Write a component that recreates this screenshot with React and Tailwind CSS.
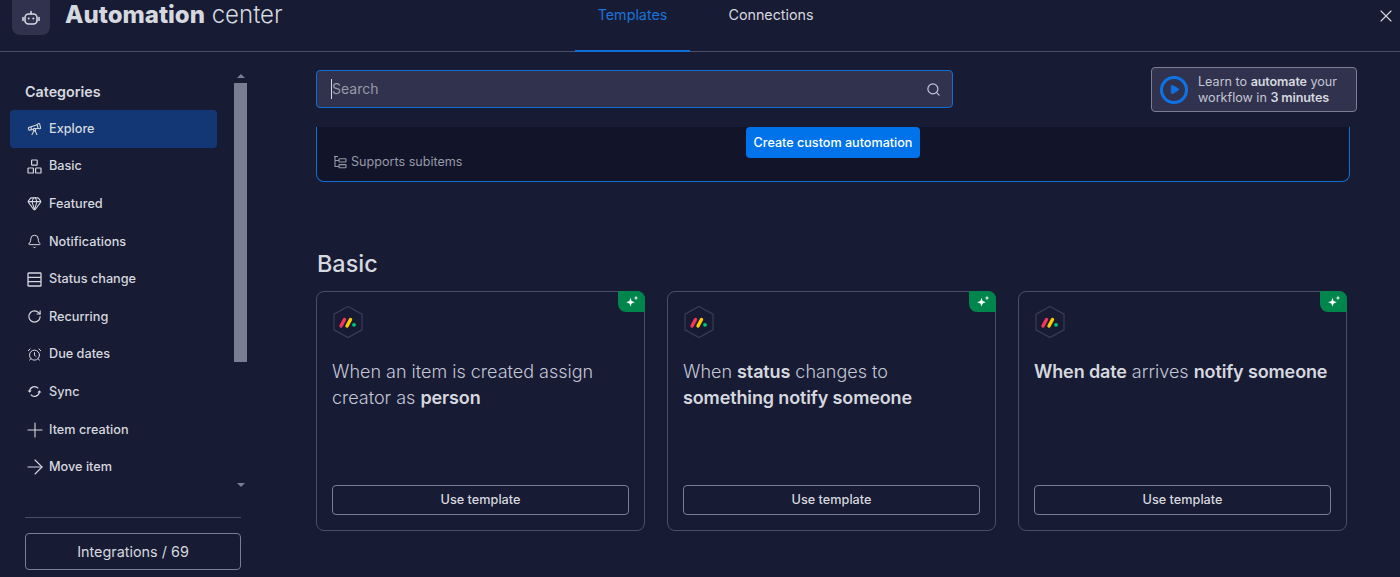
import { Search, X, Play, Telescope, Gem, Bell, RotateCw, AlarmClock, Plus, ArrowRight } from 'lucide-react'

const BotIcon = () => (
  <svg width="18" height="16" viewBox="0 0 18 16" fill="none" stroke="currentColor" strokeWidth="1.6">
    <rect x="3" y="4" width="12" height="10" rx="3.5" />
    <path d="M9 4V1.5M1 7.5V10.5M17 7.5V10.5" strokeLinecap="round" />
    <circle cx="6.7" cy="8.6" r="1" fill="currentColor" stroke="none" />
    <circle cx="11.3" cy="8.6" r="1" fill="currentColor" stroke="none" />
  </svg>
)

const BasicIcon = () => (
  <svg width="15" height="15" viewBox="0 0 15 15" fill="none" stroke="currentColor" strokeWidth="1.2">
    <rect x="4.6" y="1" width="5.6" height="5.2" rx="0.6" />
    <rect x="1" y="9" width="5.4" height="5" rx="0.6" />
    <rect x="8.6" y="9" width="5.4" height="5" rx="0.6" />
  </svg>
)

const StatusIcon = () => (
  <svg width="15" height="15" viewBox="0 0 15 15" fill="none" stroke="currentColor" strokeWidth="1.3">
    <rect x="1" y="1" width="13" height="13" rx="0.6" />
    <path d="M1 5.3H14M1 9.7H14" />
  </svg>
)

const SyncIcon = () => (
  <svg width="16" height="15" viewBox="0 0 16 15" fill="none" stroke="currentColor" strokeWidth="1.3">
    <path d="M2.8 7.2A5.2 5.2 0 0 1 12 4.2" />
    <path d="M13.2 7.8A5.2 5.2 0 0 1 4 10.8" />
    <path d="M0.6 6.4H5L2.8 8.8Z" fill="currentColor" stroke="none" />
    <path d="M11 8.6H15.4L13.2 6.2Z" fill="currentColor" stroke="none" />
  </svg>
)

const SubitemsIcon = () => (
  <svg width="14" height="14" viewBox="0 0 14 14" fill="none" stroke="currentColor" strokeWidth="1.1">
    <path d="M2 1V11.5H6M2 5.5H6" />
    <path d="M1 1.5H5" />
    <rect x="6" y="3.8" width="7" height="3.2" rx="0.5" />
    <rect x="6" y="9.6" width="7" height="3.2" rx="0.5" />
  </svg>
)

const AutomationBadgeIcon = () => (
  <svg width="14" height="13" viewBox="0 0 14 13" fill="white">
    <path d="M5.5 2.8 6.6 6 9.8 7.2 6.6 8.4 5.5 11.6 4.4 8.4 1.2 7.2 4.4 6Z" />
    <path d="M11 .6 11.6 2.4 13.4 3 11.6 3.6 11 5.4 10.4 3.6 8.6 3 10.4 2.4Z" />
  </svg>
)

const categories = [
  { name: 'Explore', icon: <Telescope size={16} strokeWidth={1.7} />, active: true },
  { name: 'Basic', icon: <BasicIcon /> },
  { name: 'Featured', icon: <Gem size={15} strokeWidth={1.7} /> },
  { name: 'Notifications', icon: <Bell size={15} strokeWidth={1.6} /> },
  { name: 'Status change', icon: <StatusIcon /> },
  { name: 'Recurring', icon: <RotateCw size={15} strokeWidth={1.8} /> },
  { name: 'Due dates', icon: <AlarmClock size={15} strokeWidth={1.6} /> },
  { name: 'Sync', icon: <SyncIcon /> },
  { name: 'Item creation', icon: <Plus size={24} strokeWidth={1.1} className="shrink-0" /> },
  { name: 'Move item', icon: <ArrowRight size={24} strokeWidth={1.1} className="shrink-0" /> },
]

const MondayLogo = () => (
  <svg width="32" height="34" viewBox="0 0 32 34" fill="none">
    <path d="M16 1.5 30 9.2V24.8L16 32.5 2 24.8V9.2Z" stroke="#3a3d57" strokeWidth="1.2" />
    <path d="M9 21 12.5 14.5" stroke="#f5365c" strokeWidth="3.4" strokeLinecap="round" />
    <path d="M15 21 18.5 14.5" stroke="#ffcb00" strokeWidth="3.4" strokeLinecap="round" />
    <circle cx="22" cy="19.8" r="1.9" fill="#00ca72" />
  </svg>
)

const TemplateCard = ({ children }) => (
  <div className="relative flex h-[240px] w-[329px] flex-col rounded-lg border border-[#4b4e69] px-[15px] pt-[13px] pb-[15px]">
    <div className="absolute -top-px -right-px flex h-[21px] w-[27px] items-center justify-center rounded-tr-lg rounded-bl-lg bg-[#00854d]">
      <AutomationBadgeIcon />
    </div>
    <MondayLogo />
    <p className="mt-[20px] text-[18px] leading-[26px] font-light text-[#c3c6d4]">{children}</p>
    <button className="mt-auto h-[30px] w-full rounded border border-[#797e93] text-[12.7px] font-medium text-[#d5d8df]">
      Use template
    </button>
  </div>
)

const B = ({ children }) => <b className="font-semibold tracking-[-0.13px] text-[#d5d8df]">{children}</b>

export default function App() {
  return (
    <div className="flex h-[577px] w-[1400px] flex-col overflow-hidden bg-[#181b34] font-['Inter',sans-serif] text-[#d5d8df]">
      <header className="relative flex h-[52px] shrink-0 items-start border-b border-[#4b4e69]">
        <div className="ml-[12px] flex h-[35px] w-[38px] items-center justify-center rounded-b-lg bg-[#30324e]">
          <BotIcon />
        </div>
        <h1 className="mt-[-1px] ml-[15px] text-[24px] leading-[32px] font-light text-[#d5d8df]">
          <span className="font-extrabold">Automation</span> center
        </h1>
        <nav className="absolute top-0 left-[575px] flex h-[52px] text-[14.3px]">
          <div className="h-[52px] w-[115px] border-b-2 border-[#0f6fd6] pt-[4px] text-center text-[#1a73d9]">Templates</div>
          <div className="w-[162px] pt-[4px] text-center text-[#d5d8df]">Connections</div>
        </nav>
        <X size={20} strokeWidth={1.3} className="absolute top-[6px] right-[4px] text-[#d5d8df]" />
      </header>

      <div className="flex min-h-0 flex-1">
        <aside className="flex w-[316px] shrink-0 flex-col">
          <div className="flex h-[465px] shrink-0">
            <div className="ml-[10px] w-[207px] pt-[28px]">
              <h2 className="ml-[15px] text-[14.3px] leading-[24px] font-semibold">Categories</h2>
              <ul className="mt-[6px]">
                {categories.map((c) => (
                  <li
                    key={c.name}
                    className={`flex h-[37.6px] items-center rounded pl-[17px] text-[12.7px] leading-[18px] font-medium ${c.active ? 'bg-[#133774]' : ''}`}
                  >
                    <span className="flex h-[15px] w-[15px] shrink-0 items-center justify-center">{c.icon}</span>
                    <span className="ml-[7px] -translate-y-[0.5px]">{c.name}</span>
                  </li>
                ))}
              </ul>
            </div>
            <div className="ml-[17px] flex w-[13px] flex-col items-center pt-[22px]">
              <div className="h-0 w-0 border-x-[4px] border-b-[4px] border-x-transparent border-b-[#797e93]" />
              <div className="mt-[5px] h-[279px] w-[13px] bg-[#797e93]" />
              <div className="mt-[121px] h-0 w-0 border-x-[4px] border-t-[4px] border-x-transparent border-t-[#797e93]" />
            </div>
          </div>
          <div className="ml-[25px] w-[216px] border-t border-[#4b4e69] pt-[15px]">
            <button className="h-[37px] w-full rounded border border-[#797e93] text-[14.4px] text-[#d5d8df]">Integrations / 69</button>
          </div>
        </aside>

        <main className="min-w-0 flex-1">
          <div className="flex h-[75px] items-start">
            <div className="mt-[18px] flex h-[38px] w-[637px] items-center justify-between rounded border border-[#0f6fd6] bg-[#30324e] pr-[11px] pl-[14px]">
              <span className="border-l border-[#d5d8df] text-[14px] leading-[20px] text-[#9699a6]">Search</span>
              <Search size={15} className="text-[#c3c6d4]" />
            </div>
            <div className="mt-[15px] ml-[198px] flex h-[45px] w-[206px] items-center gap-[10px] rounded border border-[#797e93] bg-[#30324e] pl-[8px] text-[12.6px] leading-[16px] text-[#c3c6d4]">
              <div className="flex h-[28px] w-[28px] shrink-0 items-center justify-center rounded-full border-[3px] border-[#0f73e6]">
                <Play size={11} fill="#0f73e6" className="ml-px text-[#0f73e6]" />
              </div>
              <p>
                Learn to <B>automate</B> your workflow in <B>3 minutes</B>
              </p>
            </div>
          </div>

          <div className="relative h-[55px] w-[1034px] rounded-b-lg border-x border-b border-[#0f6fd6] bg-[#12142a]">
            <button className="absolute top-0 left-[429px] h-[31px] w-[174px] rounded bg-[#0073ea] pt-px text-[12.6px] font-medium text-white">
              Create custom automation
            </button>
            <div className="absolute top-[25px] left-[16px] flex items-center gap-[4px] text-[12.6px] leading-[20px] text-[#9699a6]">
              <SubitemsIcon />
              Supports subitems
            </div>
          </div>

          <h2 className="mt-[66px] ml-px text-[23.4px] leading-[32px] font-medium text-[#d5d8df]">Basic</h2>
          <div className="mt-[11px] flex gap-[22px]">
            <TemplateCard>
              When an item is created assign creator as <B>person</B>
            </TemplateCard>
            <TemplateCard>
              When <B>status</B> changes to <B>something notify someone</B>
            </TemplateCard>
            <TemplateCard>
              <B>When date</B> arrives <B>notify someone</B>
            </TemplateCard>
          </div>
        </main>
      </div>
    </div>
  )
}
